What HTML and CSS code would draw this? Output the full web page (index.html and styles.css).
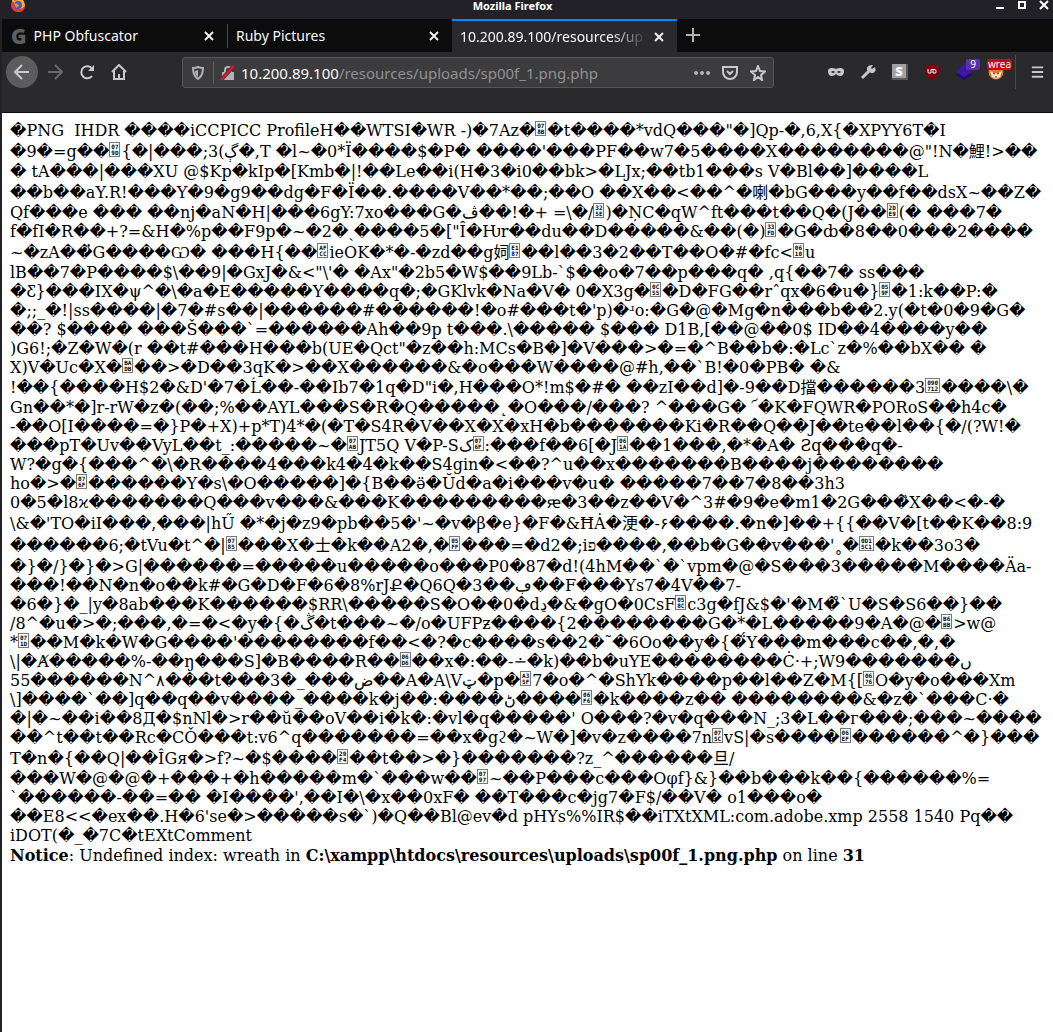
FILE: index.html
```html
<!DOCTYPE html>
<html lang="en">
<head>
<meta charset="utf-8">
<title>Mozilla Firefox</title>
<link rel="stylesheet" href="styles.css">
</head>
<body>
<header class="titlebar">
  <svg class="fox" viewBox="0 0 16 16" aria-hidden="true"><circle cx="8" cy="8" r="7" fill="#f0443a"/><path d="M2 4 3 1l2 3 3-1 3-3 3 5 1 4-4 4z" fill="#ffb12b"/><path d="M1 7q1 8 8 8 5 0 6-6-3 4-7 3-5-1-4-7z" fill="#f5303f"/><circle cx="8" cy="8" r="4" fill="#3b5bd9"/><path d="M4 6l4 1 1 2-3 2z" fill="#ff8a1e"/></svg>
  <h1 class="window-title">Mozilla Firefox</h1>
  <div class="window-buttons">
    <button aria-label="Minimize"><svg viewBox="0 0 10 10"><path d="M1 8h8" stroke="#fff" stroke-width="2"/></svg></button>
    <button aria-label="Maximize"><svg viewBox="0 0 10 10"><path d="M2 2h6v6H2z" fill="none" stroke="#fff" stroke-width="2"/></svg></button>
    <button aria-label="Close"><svg viewBox="0 0 10 10"><path d="M1 1l8 8M9 1L1 9" stroke="#fff" stroke-width="2"/></svg></button>
  </div>
</header>
<div class="window">
<nav class="tabs">
  <div class="tab"><span class="favicon">G</span><span class="tab-name">PHP Obfuscator</span><button class="tab-close" aria-label="Close tab"><svg viewBox="0 0 10 10"><path d="M1 1l8 8M9 1L1 9"/></svg></button></div>
  <div class="tab divided"><span class="tab-name">Ruby Pictures</span><button class="tab-close" aria-label="Close tab"><svg viewBox="0 0 10 10"><path d="M1 1l8 8M9 1L1 9"/></svg></button></div>
  <div class="tab active"><span class="tab-name">10.200.89.100/resources/up</span><button class="tab-close" aria-label="Close tab"><svg viewBox="0 0 10 10"><path d="M1 1l8 8M9 1L1 9"/></svg></button></div>
  <button class="new-tab" aria-label="New tab"><svg viewBox="0 0 14 14"><path d="M7 0v14M0 7h14"/></svg></button>
</nav>
<div class="toolbar">
  <div class="nav-buttons">
    <button class="back" aria-label="Back"><svg viewBox="0 0 16 16"><path d="M15 8H1M8 1L1 8l7 7"/></svg></button>
    <button class="forward" aria-label="Forward"><svg viewBox="0 0 16 16"><path d="M1 8h14M8 1l7 7-7 7"/></svg></button>
    <button aria-label="Reload"><svg viewBox="0 0 16 16"><path d="M13 4.500A6 6 0 1 0 13 12"/><path d="M15 1v6H9z" fill="#c8c8ca" stroke="none"/></svg></button>
    <button aria-label="Home"><svg viewBox="0 0 16 16"><path d="M1 8l7-7 7 7M3 7v8h10V7M8 15v-5"/></svg></button>
  </div>
  <div class="urlbar">
    <svg class="shield" viewBox="0 0 16 16"><path d="M3 3q3 0 5-1 2 1 5 1 0 8-5 11-5-3-5-11z" fill="none" stroke="#b1b1b3" stroke-width="2"/><path d="M8 5v7Q5 10 5 6z" fill="#b1b1b3"/></svg>
    <span class="url-rule"></span>
    <svg class="lock" viewBox="0 0 16 16"><path d="M5 8V5q0-3 3-3t3 3v3" fill="none" stroke="#b1b1b3" stroke-width="2"/><path d="M2 7h12v8H2z" fill="#b1b1b3"/><path d="M1 15L14 1" stroke="#3c3c3f" stroke-width="4"/><path d="M1 15L14 1" stroke="#e8112d" stroke-width="2"/></svg>
    <span class="url"><span class="url-host">10.200.89.100</span>/resources/uploads/sp00f_1.png.php</span>
    <button aria-label="Page actions"><svg viewBox="0 0 16 16"><path d="M2 6a2 2 0 1 0 .1 0zM8 6a2 2 0 1 0 .1 0zM14 6a2 2 0 1 0 .1 0z" fill="#b1b1b3" stroke="none"/></svg></button>
    <button aria-label="Save to Pocket"><svg viewBox="0 0 16 16"><path d="M1 2h14v5a7 7 0 0 1-14 0zM5 6l3 3 3-3"/></svg></button>
    <button aria-label="Bookmark"><svg viewBox="0 0 16 16"><path d="M8 1l2 5 5 .5-4 3.500 1 5-4-3-4 3 1-5-4-3.500L6 6z"/></svg></button>
  </div>
  <div class="extensions">
    <button aria-label="Mask"><svg viewBox="0 0 16 16"><path d="M0 7q0-3 4-3 2 0 4 1 2-1 4-1 4 0 4 3 0 5-4 5-2 0-4-2-2 2-4 2-4 0-4-5z" fill="#c8c8ca" stroke="none"/><path d="M3 8q2-2 4 0-2 2-4 0zM9 8q2-2 4 0-2 2-4 0z" fill="#2a2a2c" stroke="none"/></svg></button>
    <button aria-label="Tools"><svg viewBox="0 0 16 16"><path d="M2 14L9 7" stroke-width="3"/><path d="M13 1L11 4l1 1 3-2q2 6-4 6L7 6q-1-5 6-5z" fill="#c8c8ca" stroke="none"/></svg></button>
    <button class="ext-s" aria-label="Stylesheets">S</button>
    <button aria-label="Blocker"><svg viewBox="0 0 16 16"><path d="M1 2q5 0 7-2 2 2 7 2 1 11-7 14Q0 13 1 2z" fill="#800010" stroke="none"/><path d="M4 5v3q0 1 1 1h2V5.500h4q1 0 1 2t-1 1.500H9V5" stroke="#fff" stroke-width="1"/></svg></button>
    <button class="badged" aria-label="Layers"><svg viewBox="0 0 16 16"><path d="M0 11l8-6 8 6-8 5z" fill="#1d0c6b" stroke="none"/><path d="M0 8l8-8 8 8-8 5z" fill="#3f17a8" stroke="none"/></svg><span class="badge purple">9</span></button>
    <button class="badged" aria-label="FoxyProxy"><svg viewBox="0 0 16 16"><circle cx="8" cy="8" r="7.500" fill="#d9772b" stroke="none"/><path d="M2 7l4 2h4l4-2-2 6-4 2-4-2z" fill="#f3dfca" stroke="none"/><path d="M5 9l2 1M11 9l-2 1M7 13h2" stroke="#40291a" stroke-width="1"/></svg><span class="badge red">wrea</span></button>
  </div>
  <button class="menu" aria-label="Menu"><svg viewBox="0 0 16 16"><path d="M2 3h12M2 8h12M2 13h12"/></svg></button>
</div>
<main class="page">
<p class="dump"><span>�PNG  IHDR ����iCCPICC ProfileH��WTSI�WR -)�7Az�<i>07<br>8B</i>�t����*vdQ���"�]Qp-�,6,X{�XPYY6T�I</span>
<span class="tall">�9�=g��<i>07<br>9D</i>{�|���;3(ڳ�,T �l~�0*Ï����$�P� ����'���PF��w7�5����X��������@"!N�鯉!&gt;��</span>
<span>� tA���|���XU @$Kp�kIp�[Kmb�|!��Le��i(H�3�i0��bk&gt;�LJx;��tb1���s V�Bl��]����L</span>
<span class="tall">��b��aY.R!���Y�9�g9��dg�F�Ï��.����V��*��;��O ��X��&lt;��^�喇�bG���y��f��dsX~��Z�</span>
<span>Qf���e ��� ��nj�aN�H|���6gY:7xo���G�ڤ��!�+ =\�/<i>32<br>5E</i>)�ŅC�qW^ft���t��Q�(J��<i>2D<br>E9</i>(� ���7�</span>
<span>f�fI�R��+?=&amp;H�%p��F9p�~�2�ˏ����5�["Ȋ�Ƕr��du��D�����&amp;��(�)<i>33<br>FD</i>�G�ȸ�8��0���2����</span>
<span class="tall">~�zA��̓G����Ѡ� ���H{��<i>AF<br>CC</i>ieOK�*�-�zd��g㚸<i>E1<br>87</i>��l��3�2��T��O�#�fc&lt;<i>06<br>10</i>u</span>
<span>lB��7�P����$\��9|�GxJ�&amp;&lt;"\'� �Ax"�2b5�W$��9Lb-`$��o�7��p���q� ,q{��7� ss���</span>
<span>�Ƹ}���IX�ψ^�\�a�E�����Y����q�;�GKlvk�Na�V� 0�X3g�<i>0C<br>55</i>�D�FG��rˆqx�6�u�}<i>05<br>9F</i>�1:k��P:�</span>
<span>�;;_�!|ss����|�7�#s��|������#������!�o#���t�'p)�ʴo:�G�@�Mg�n���b��2.y(�t�0�9�G�</span>
<span>��? $���� ���Š���`=������Ah��9p t���.\����� $��� D1B,[��@��0$ ID��4����y��</span>
<span>)G6!;�Z�W�(r ��t#���H���b(UE�Qct"�z��h:MCs�B�]�V���&gt;�=�^B��b�:�Lc`z�%��bX�� �</span>
<span>X)V�Uc�X�<i>BA<br>DB</i>��&gt;�D��3qK�&gt;��X������&amp;�o���W����@#h,��`B!�0�PB� �&amp;</span>
<span class="mid">!��{����H$2�&amp;D'�7�Ĺ��-��Ib7�1q�D"i�,H���O*!m$�#� ��zI��d]�-9��D擋������3<i class="wide">090<br>712</i>����\�</span>
<span>Gn��*�]r-rW�z�(��;%��AYL���S�R�Q�����˛�O���/���? ^���G� ՜�K�FQWR�PORoS��h4c�</span>
<span>-��O[I����=�}P�+X)+p*T)4*�(�T�S4R�V��X�X�xH�b�������Ki�R��Q��J��te��l��{�/(?W!�</span>
<span>���pT�Uv��VyL��t_:�����~�<i>07<br>AB</i>JT5Q V�P-Sک<i>07<br>6F</i>:���f��6[�J<i>06<br>1A</i>��1���,�*�A� Ƨq���q�-</span>
<span>W?�g�{���^�\�R����4���k4�4�k��S4gin�&lt;��?^u��x�������B����j��������</span>
<span>ho�&gt;�<i>07<br>6F</i>������Y�s\�O�����]�{B��ӛ�Ŭd�a�i���v�u� �����7��7�8��3h3</span>
<span>0�5�l8ϰ�������Q���v���&amp;���K���������ԙ�3��z��V�^3#�9�e�m1�2G���̏X��&lt;�-�</span>
<span class="tall">\&amp;�'TO�iI���,���|hŰ �*�j�z9�pb��5�'~�v�β�e}�F�&amp;ĦȦ�浭�-۶����.�n�]��+{{��V�[t��K��8:9</span>
<span class="tall">������6;�tVu�t^�|<i>07<br>85</i>���X�士�k��A2�,�<i>05<br>FF</i>���=�d2�;iפ����,��b�G��v���'˳�<i class="wide">0D1<br>5C1</i>�k��3o3�</span>
<span class="low">�}�/}�}�&gt;G|������=�����u�����o���P0�87�d!(4hM��`�`vpm�@�S���3�����M����Äa-</span>
<span>���!��N�n�o��k#�G�D�F�6�8%rJՔ�Q6Q�3��ڢ��F���Ys7�4V��7-</span>
<span>�6�}�_|y�8ab���K������$RR\�����S�O��0�dڍ�&amp;�gO�0CsF<i>05<br>8C</i>c3g�fJ&amp;$�'�M�̊`U�S�S6��}��</span>
<span>/8^�u�&gt;�;���,�=�&lt;�y�{�ڴ�t���~�/o�UFPƶ����{2��������G�*�L�����9�A�@�<i>B6<br>BB</i>&gt;w@</span>
<span>*<i>07<br>1D</i>��M�k�W�G����'��������f��&lt;�?�c����s��2�˜�6Oo��y�{�̈́Y���m���c��,�,�</span>
<span>\|�Ⱥ�����%-��ŋ���S]�B����R��<i>06<br>D6</i>��x�:��-∸�k)��b�uYE��������Ċ·+;W9�������ں</span>
<span>55������N^۸���t���3�_���ض��A�A\Vټ�p�<i>A3<br>5F</i>7�o�^�ShYk����p��l��Z�M{[<i>06<br>76</i>O�y�o���Xm</span>
<span>\]����`��]q��q��v����_����k�j��:����ڻ����<i>06<br>F6</i>�k����z�� ��������&amp;�z�`���C·�</span>
<span>�|�~��i��8Д�$nNl�&gt;r��ŭ��oV��i�k�:�vl�q�����' O���?�v�q���N_;3�L��г���;���~����</span>
<span>��^t��t��Rc�CǑ���t:v6^q�������=��x�gϩ�~W�]�v�z����7n<i>07<br>5C</i>vS|�s����<i>06<br>EF</i>������^�}���</span>
<span class="tall">T�n�{��Q|��ÎGя�&gt;f?~�$����<i>29<br>F4</i>��t��&gt;�}�������?z_^������旦/</span>
<span>���W�@�@�+���+�h�����m�`���w��<i>07<br>97</i>~��P���c���Oφf}&amp;}��b���k��{������%=</span>
<span>`������-��=�� �I����',��I�\�x��0xF� ��T���c�jg7�F$/��V� o1���o�</span>
<span>��E8&lt;&lt;�ex��.H�6'se�&gt;�����s�`)�Q��Bl@ev�d pHYs%%IR$��iTXtXML:com.adobe.xmp 2558 1540 Pq��</span>
<span>iDOT(�_�7C�tEXtComment</span></p>
<p class="notice"><b>Notice</b>: Undefined index: wreath in <b>C:\xampp\htdocs\resources\uploads\sp00f_1.png.php</b> on line <b>31</b></p>
</main>
</div>
</body>
</html>
```
FILE: styles.css
```css
* { box-sizing: border-box; }
body {
  display: flex;
  flex-direction: column;
  min-height: 100vh;
  margin: 0;
  background: #212127;
  color: #000;
  font: 16px/19px "DejaVu Serif", "Noto Sans CJK JP", serif;
}
button {
  display: flex;
  align-items: center;
  justify-content: center;
  flex: none;
  width: 16px;
  height: 16px;
  padding: 0;
  border: 0;
  background: none;
  color: inherit;
  font: inherit;
}
svg { display: block; flex: none; width: 100%; height: 100%; }

.titlebar {
  display: grid;
  grid-template-columns: 1fr auto 1fr;
  align-items: start;
  height: 19px;
  padding: 0 4px 0 10px;
  background: #212127;
  color: #fff;
  font-family: "Noto Sans", sans-serif;
}
.fox { width: 16px; height: 16px; margin-top: -3px; }
.window-title { margin: 0 34px 0 0; font-size: 11px; line-height: 11px; font-weight: 700; }
.window-buttons { display: flex; justify-content: flex-end; gap: 12px; }
.window-buttons button { width: 10px; height: 10px; }

.window { display: flex; flex: 1; flex-direction: column; margin-left: 2px; }
.tabs {
  display: flex;
  height: 33px;
  background: #0c0c0d;
  color: #f9f9fa;
  font: 14px/20px "Noto Sans", sans-serif;
}
.tab {
  display: flex;
  align-items: center;
  flex: 0 1 225px;
  min-width: 0;
  gap: 7px;
  padding: 0 13px 0 9px;
}
.divided { background: linear-gradient(#4a4a4f, #4a4a4f) 0 5px / 1px 24px no-repeat; }
.active {
  padding-left: 8px;
  border-top: 2px solid #0a84ff;
  background: #2a2a2c;
}
.favicon { color: #5e5e60; font: 900 21px/20px "Noto Sans", sans-serif; }
.tab-name { flex: 1; overflow: hidden; white-space: nowrap; }
.active .tab-name { mask-image: linear-gradient(to left, transparent, #000 36px); }
.tab-close { width: 10px; height: 10px; }
.tab-close svg, .new-tab svg { stroke: #f0f0f1; stroke-width: 2; }
.new-tab { width: 14px; height: 14px; margin: 9px 0 0 9px; }
.new-tab svg { stroke: #b1b1b3; }

.toolbar {
  display: flex;
  align-items: flex-start;
  height: 61px;
  padding: 4px 0 0 4px;
  overflow-x: clip;
  border-bottom: 1px solid #0c0c0d;
  background: #2a2a2c;
}
.toolbar button svg { fill: none; stroke: #c8c8ca; stroke-width: 2; }
.nav-buttons { display: flex; align-items: center; gap: 16px; height: 32px; margin-right: 55px; }
.nav-buttons .back { width: 32px; height: 32px; padding: 8px; border-radius: 50%; background: #5c5c5e; margin-right: -7px; }
.nav-buttons .forward svg { stroke: #6a6a6c; }
.urlbar {
  display: flex;
  align-items: center;
  flex: 0 1 592px;
  min-width: 0;
  gap: 12px;
  height: 31px;
  margin-top: 1px;
  padding: 0 7px;
  border: 1px solid #55555a;
  border-radius: 3px;
  background: #3c3c3f;
  color: #909093;
  font: 15px/20px "Noto Sans", sans-serif;
}
.shield, .lock { width: 16px; height: 16px; }
.url-rule { width: 1px; height: 22px; margin: 0 -6px 0 -5px; background: #5c5c66; }
.url { flex: 1; overflow: hidden; margin-left: -7px; white-space: nowrap; }
.url-host { color: #f9f9fa; }
.extensions { display: flex; align-items: center; gap: 16px; height: 32px; margin-left: auto; }
.ext-s { border-right: 2px solid #55585c; border-bottom: 2px solid #55585c; background: #a0a2a4; color: #fff; font: 900 13px/14px "Noto Sans", sans-serif; }
.badged { position: relative; }
.badge {
  position: absolute;
  top: -5px;
  right: -8px;
  padding: 0 4px;
  border-radius: 2px;
  color: #fff;
  font: 10px/11px "Noto Sans", sans-serif;
}
.purple { background: #592fad; }
.red { padding: 0 1px; background: #d00010; }
.menu { width: 44px; height: 34px; margin: -1px -6px 0 11px; padding: 9px 14px; border-left: 1px solid #4a4a4d; }

.page { flex: 1; padding: 8px; background: #fff; }
.page p { margin: 0; }
.page .notice { padding-top: 1px; }
.dump { white-space: nowrap; }
.dump span {
  display: block;
  height: 19px;
  direction: ltr;
  unicode-bidi: bidi-override;
  white-space: pre;
}
.dump .mid { height: 21px; padding-top: 1px; }
.dump .low { height: 20px; padding-top: 1px; }
.dump .tall { height: 22px; padding-top: 2px; }
.dump i {
  display: inline-block;
  overflow: hidden;
  width: 11px;
  height: 15px;
  margin-right: 1px;
  padding-top: 1px;
  border: 1px solid #777;
  font: 700 6px/6px "DejaVu Sans Mono", monospace;
  text-align: center;
}
.dump .wide { width: 15px; }
```
